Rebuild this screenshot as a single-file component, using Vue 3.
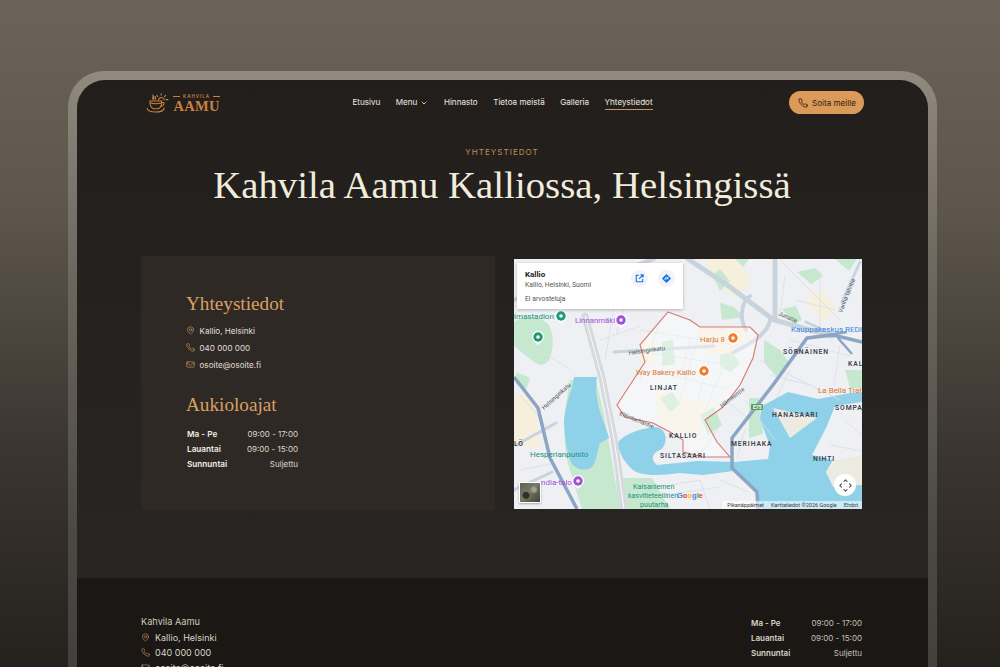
<template>
  <div class="stage">
    <div class="device">
      <div class="screen">
        <header class="topbar">
          <a class="logo">
            <svg class="logo-cup" viewBox="0 0 24 24" fill="none" stroke="#c98240" stroke-width="1.100" stroke-linecap="round">
              <path d="M4 10.500h12.500c0 4.500-1.600 7.200-3.600 8H7.600c-2-.8-3.600-3.500-3.600-8z" />
              <path d="M4.600 12.600c3 .9 8 .9 11.400 0" />
              <path d="M16.300 12h1.800c1.400 0 1.400 3.200-2.800 4.400" />
              <path d="M1.200 18.200c.4 2.600 4 3.800 8.800 3.800s8.200-1.200 9-4" />
              <path d="M7.200 8.600c-1.200-1.600.9-2.200.2-4.100 1.700 1.300 1 2.800.7 4.100M10 8.600c-.6-1 .3-1.600 0-2.800" />
              <path d="M13 9.300a3.200 3.200 0 0 1 6.200-.3M15.800 4.300V2.800M12.300 5.800l-1-1.200M19.300 5.800l1.300-1.200M21 9h1.800" />
            </svg>
            <span class="logo-words">
              <span class="logo-small"><i></i>KAHVILA<i></i></span>
              <span class="logo-big">AAMU</span>
            </span>
          </a>
          <nav class="nav">
            <a v-for="item in navItems" :key="item.label" :class="{ active: item.active }">
              {{ item.label }}
              <svg v-if="item.caret" viewBox="0 0 24 24" fill="none" stroke="currentColor" stroke-width="2.400" stroke-linecap="round" stroke-linejoin="round"><path d="m6 9 6 6 6-6" /></svg>
            </a>
          </nav>
          <button class="call">
            <svg viewBox="0 0 24 24" fill="none" stroke="currentColor" stroke-width="2" stroke-linecap="round" stroke-linejoin="round"><path :d="icons.phone" /></svg>
            Soita meille
          </button>
        </header>

        <section class="hero">
          <p class="eyebrow">YHTEYSTIEDOT</p>
          <h1>Kahvila Aamu Kalliossa, Helsingissä</h1>
        </section>

        <section class="contact">
          <div class="panel">
            <h2>Yhteystiedot</h2>
            <ul class="info">
              <li v-for="row in contactRows" :key="row.text">
                <svg viewBox="0 0 24 24" fill="none" stroke="#c9935a" stroke-width="1.800" stroke-linecap="round" stroke-linejoin="round">
                  <path v-for="d in row.paths" :key="d" :d="d" />
                </svg>
                {{ row.text }}
              </li>
            </ul>
            <h2 class="second">Aukioloajat</h2>
            <div class="hours">
              <template v-for="row in hours" :key="row.day">
                <b>{{ row.day }}</b><span>{{ row.time }}</span>
              </template>
            </div>
          </div>

          <div class="map">
            <svg class="map-art" viewBox="514 259 348 250" preserveAspectRatio="none">
              <rect x="514" y="259" width="348" height="250" fill="#eef0f3" />
              <!-- blocks and parks -->
              <g fill="#f6efdc">
                <path d="M708 259l30 0 14 24-18 14-26-20z" />
                <path d="M810 291h14l12 18-12 12-16-18z" />
                <path d="M514 395h20l6 52h-26z" />
                <path d="M655 390l60 16-20 30-34-10z" />
                <path d="M700 328h45l5 10-18 20-30-8z" />
                <path d="M640 340l16 2-4 24-14-6z" />
              </g>
              <g fill="#c5e8cf">
                <path d="M514 322c10-8 26-6 34 2 6 8 6 22 2 34-4 8-10 8-16 4l-20-16z" />
                <path d="M570 380c-6 30-8 60-2 84l14 45h38l-10-60-6-34-8-35z" />
                <path d="M616 478l36 0 18 31h-52z" />
                <path d="M712 275l8-6 10 12-10 10zM735 259h14l-6 8zM797 272l18-4 8 8-12 8zM835 259h22l-8 12zM782 309l14-3 6 14-8 4zM720 303l14 4 10 10-22 3zM764 340l16 10 10 14-14 12-12-14zM845 370h17v18h-12zM720 355l12-3 8 12-10 8-10-6zM662 342l11-2 2 24-13 2zM530 268l14-5 6 8-12 6zM700 415l14-8 8 18-14 10zM660 398l12-6 8 12-10 8zM749 398l10 0 4 36-14 4zM854 450l8-6v40h-6zM618 268l14-4 6 10-14 6zM640 300l12-4 4 8-12 6zM555 290l12-4 6 10-12 4zM516 372l14 6-4 12-10-6z" />
              </g>
              <!-- water -->
              <path fill="#8fd1e8" d="M574 377h23c-2 12 0 26 4 38 3 8 6 16 8 23l-9 5c-3 8-3 18-8 24-6 4-14 4-20-3-5-10-7-26-8-40 0-12 3-20 5-28 3-6 4-12 5-19z" />
              <path fill="#8fd1e8" d="M618 443c4-8 22-15 39-16 11 3 11 18 3 23-8 3-10 10-3 15l40-4 38 1 33-3 2-13-10-27 2-13 26-14 30 7 32-6h12v117H760l-2-19-25-20-30 4-23-2c-20 3-40 3-47-3-8-7-15-17-15-29z" />
              <path fill="#eef0f3" d="M862 402l-27 4-9 22-14 27 21 5-7 12 7 13 29-3z" />
              <path fill="#ecebe2" d="M835 461l27-6v30l-29 2-7-15z" />
              <path fill="#ecebe2" d="M773 408l44 10-27 20z" />
              <!-- minor streets -->
              <g fill="none" stroke="#d9dee4" stroke-width=".8">
                <path d="M640 330l100 16M645 352l90 14M655 372l70 16M660 320l-20 60M700 330l-20 70M735 340l-30 70M790 340l60 16M820 270v60M780 260l60 60M560 275l-46 40M530 345l40 24M625 270l60 30M760 360l80 40M775 440l-30-40M640 490l60-10M700 480l10 29M795 300l40 10M785 275l-5 40M840 345l-6 40M790 370l-14 28M770 375l40 10M615 300l-10 60M630 285l-14 50M520 395l30 35M690 340l-8 30M710 358l-12 40M725 400l25 20M700 455l20-30M745 430l-8 28M845 420l17 16M830 445l32 6M720 480l28 12M665 495l55-8M600 340l40-14M520 470l30-6" />
              </g>
              <!-- main roads -->
              <g fill="none" stroke="#c9d3de" stroke-linecap="round">
                <path stroke-width="5" d="M688 259l42 28 44 33 58 16M775 259v60" />
                <path stroke-width="4" d="M770 320c-2 14-20 24-36 32M750 296c-10 8-10 24-4 34M514 300l40-16 50-8 50-17" />
                <path stroke-width="3" d="M614 352l100-6M516 445l40-22M514 490l38-18M842 302l18-40M806 322l26 12" />
                <path stroke-width="7" stroke="#d6dade" d="M585 316l17 62 12 60 10 71" />
              </g>
              <g fill="none" stroke="#fafafa" stroke-width="1"><path d="M585 316l17 62 12 60 10 71" /></g>
              <g fill="none" stroke="#8ba6c4" stroke-width="3.500" stroke-linejoin="round">
                <path d="M514 377l24 31 12 50 27 51" />
                <path d="M862 342l-29-7-26 3-34 47-41 53v30l25 24 1 17" />
                <path stroke-width="2.500" d="M807 338l40-6M838 338l14 16" />
              </g>
              <!-- Kallio boundary -->
              <path fill="#fff" fill-opacity=".4" stroke="#d9786e" stroke-width="1.100" d="M668 312l22 8 10 7h50l8 8-5 23-13 27-17 22-18 13 12 22 13 15-27 0-20-5v-12l-13-8-17-9-28-6-8-12 13-20 15-23-5-17z" />
              <!-- street names -->
              <g font-size="6" fill="#4d5660" class="street">
                <text transform="translate(629 355) rotate(-8)">Helsinginkatu</text>
                <text transform="translate(544 410) rotate(-42)">Helsinginkatu</text>
                <text transform="translate(619 415) rotate(22)">Eläintarhantie</text>
                <text transform="translate(722 408) rotate(-38)">Hämeentie</text>
                <text transform="translate(778 315) rotate(24)">Junatie</text>
                <text transform="translate(842 313) rotate(-68)">Vanha talvitie</text>
              </g>
              <!-- place labels -->
              <text v-for="label in mapLabels" :key="label.text" :x="label.x" :y="label.y" :fill="label.color" :font-size="label.size" :font-weight="label.weight" :letter-spacing="label.spacing">{{ label.text }}</text>
              <!-- pins -->
              <g v-for="pin in mapPins" :key="pin.x + '-' + pin.y">
                <path fill="#fff" :d="`M${pin.x - 6} ${pin.y}a6 6 0 0 1 12 0c0 3-3 5-6 8-3-3-6-5-6-8z`" />
                <circle :cx="pin.x" :cy="pin.y" r="4.700" :fill="pin.color" />
                <circle :cx="pin.x" :cy="pin.y" r="1.800" fill="#fff" />
              </g>
              <rect x="751" y="404" width="12" height="6" rx="1" fill="#5c9a63" />
              <text x="753" y="409" font-size="5" fill="#fff" font-weight="700">E75</text>
            </svg>

            <div class="place-card">
              <div>
                <strong>Kallio</strong>
                <p>Kallio, Helsinki, Suomi</p>
                <p class="reviews">Ei arvosteluja</p>
              </div>
              <span class="round">
                <svg viewBox="0 0 24 24" fill="none" stroke="#1a73e8" stroke-width="2.400"><path d="M19 13v6H5V5h6M14 4h6v6M20 4l-9 9" /></svg>
              </span>
              <span class="round">
                <svg viewBox="0 0 24 24"><path fill="#1a73e8" d="M12 2l10 10-10 10L2 12z" /><path fill="none" stroke="#fff" stroke-width="2" d="M9 15v-4h6M13 8l3 3-3 3" /></svg>
              </span>
            </div>
            <div class="thumb"></div>
            <span class="google"><i>G</i><i>o</i><i>o</i><i>g</i><i>l</i><i>e</i></span>
            <span class="compass">
              <svg viewBox="0 0 24 24" fill="none" stroke="#555" stroke-width="1.800" stroke-linecap="round" stroke-linejoin="round"><path d="M9.500 5.500 12 3l2.500 2.500M9.500 18.500 12 21l2.500-2.500M5.500 9.500 3 12l2.500 2.500M18.500 9.500 21 12l-2.500 2.500" /></svg>
            </span>
            <div class="map-foot">
              <span>Pikanäppäimet</span><span>Karttatiedot ©2026 Google</span><span>Ehdot</span>
            </div>
          </div>
        </section>

        <footer class="foot">
          <div class="foot-left">
            <p class="foot-name">Kahvila Aamu</p>
            <ul>
              <li v-for="row in contactRows" :key="row.text">
                <svg viewBox="0 0 24 24" fill="none" stroke="#b9875a" stroke-width="1.800" stroke-linecap="round" stroke-linejoin="round">
                  <path v-for="d in row.paths" :key="d" :d="d" />
                </svg>
                {{ row.text }}
              </li>
            </ul>
          </div>
          <div class="hours foot-hours">
            <template v-for="row in hours" :key="row.day">
              <b>{{ row.day }}</b><span>{{ row.time }}</span>
            </template>
          </div>
        </footer>
      </div>
    </div>
  </div>
</template>

<script setup>
const icons = {
  pin: ['M20 10c0 5-5.500 9.700-7.400 11.200a1 1 0 0 1-1.200 0C9.500 19.700 4 15 4 10a8 8 0 0 1 16 0z', 'M15 10a3 3 0 1 1-6 0 3 3 0 0 1 6 0z'],
  phone: 'M22 16.920v3a2 2 0 0 1-2.180 2 19.790 19.790 0 0 1-8.630-3.070 19.500 19.500 0 0 1-6-6 19.790 19.790 0 0 1-3.070-8.670A2 2 0 0 1 4.110 2h3a2 2 0 0 1 2 1.720 12.840 12.840 0 0 0 .7 2.810 2 2 0 0 1-.45 2.110L8.090 9.910a16 16 0 0 0 6 6l1.270-1.270a2 2 0 0 1 2.110-.45 12.840 12.840 0 0 0 2.810.7A2 2 0 0 1 22 16.920z',
  mail: ['M4 5h16a2 2 0 0 1 2 2v10a2 2 0 0 1-2 2H4a2 2 0 0 1-2-2V7a2 2 0 0 1 2-2z', 'm22 8-10 6L2 8']
}

const navItems = [
  { label: 'Etusivu' },
  { label: 'Menu', caret: true },
  { label: 'Hinnasto' },
  { label: 'Tietoa meistä' },
  { label: 'Galleria' },
  { label: 'Yhteystiedot', active: true }
]

const contactRows = [
  { text: 'Kallio, Helsinki', paths: icons.pin },
  { text: '040 000 000', paths: [icons.phone] },
  { text: 'osoite@osoite.fi', paths: icons.mail }
]

const hours = [
  { day: 'Ma - Pe', time: '09:00 - 17:00' },
  { day: 'Lauantai', time: '09:00 - 15:00' },
  { day: 'Sunnuntai', time: 'Suljettu' }
]

const dark = { color: '#3c434b', size: 6.800, weight: 600, spacing: 0.9 }
const teal = { color: '#22917a', size: 8 }
const mapLabels = [
  { text: 'imastadion', x: 514, y: 319, ...teal },
  { text: 'Linnanmäki', x: 575, y: 323, color: '#a34fd6', size: 7.800 },
  { text: 'Harju 8', x: 700, y: 342, color: '#e0752c', size: 7.800 },
  { text: 'Way Bakery Kallio', x: 636, y: 375, color: '#e0752c', size: 7.600 },
  { text: 'Kauppakeskus REDI', x: 791, y: 332, color: '#3a84df', size: 8 },
  { text: 'La Bella Trat', x: 818, y: 393, color: '#e0752c', size: 8 },
  { text: 'SÖRNÄINEN', x: 783, y: 354, ...dark },
  { text: 'KAL', x: 848, y: 366, ...dark },
  { text: 'LINJAT', x: 650, y: 390, ...dark },
  { text: 'KALLIO', x: 669, y: 438, ...dark },
  { text: 'SILTASAARI', x: 660, y: 458, ...dark },
  { text: 'MERIHAKA', x: 731, y: 446, ...dark },
  { text: 'HANASAARI', x: 772, y: 417, ...dark },
  { text: 'SOMPA', x: 835, y: 410, ...dark },
  { text: 'NIHTI', x: 813, y: 461, ...dark },
  { text: 'LÖ', x: 514, y: 446, ...dark },
  { text: 'Hesperianpuisto', x: 530, y: 457, ...teal },
  { text: 'ndia-talo', x: 541, y: 485, color: '#a34fd6', size: 8 },
  { text: 'Kaisaniemen', x: 633, y: 489, color: '#22917a', size: 7.200 },
  { text: 'kasvitieteellinen', x: 628, y: 498, color: '#22917a', size: 7 },
  { text: 'puutarha', x: 640, y: 507, color: '#22917a', size: 7.200 }
]

const mapPins = [
  { x: 561, y: 316, color: '#1e9a73' },
  { x: 538, y: 337, color: '#1e9a73' },
  { x: 621, y: 320, color: '#a34fd6' },
  { x: 733, y: 338, color: '#ef7d2d' },
  { x: 704, y: 371, color: '#ef7d2d' },
  { x: 578, y: 481, color: '#a34fd6' }
]
</script>

<style scoped>
.stage {
  height: 667px;
  overflow: hidden;
  padding-top: 71px;
  box-sizing: border-box;
  font-family: Inter, "Noto Sans", sans-serif;
}

.device {
  width: 851px;
  margin: 0 0 0 68px;
  padding: 9px 9px 0;
  border-radius: 36px 36px 0 0;
  background: linear-gradient(#928a7e 0, #868075 50px, #6a655c 220px, #4c4945 460px, #42403d 600px);
}

.screen {
  height: 900px;
  border-radius: 28px 28px 0 0;
  background: linear-gradient(#211e1b, #282522 490px);
  overflow: hidden;
}

.topbar {
  display: flex;
  align-items: center;
  justify-content: space-between;
  padding: 11px 64px 0 69px;
  height: 23px;
}

.logo {
  display: flex;
  align-items: center;
  gap: 4px;
  width: 74px;
}

.logo-cup {
  width: 23px;
  height: 23px;
  flex: none;
}

.logo-words {
  display: flex;
  flex-direction: column;
  align-items: center;
  color: #c98240;
}

.logo-small {
  display: flex;
  align-items: center;
  gap: 3px;
  font-size: 4.500px;
  letter-spacing: 1px;
  font-weight: 600;
  line-height: 6px;
}

.logo-small i {
  width: 7px;
  height: 1px;
  background: #c98240;
}

.logo-big {
  font-family: "Liberation Serif", serif;
  font-weight: 700;
  font-size: 14.500px;
  line-height: 12px;
  letter-spacing: .3px;
}

.nav {
  display: flex;
  align-items: center;
  gap: 15.500px;
  margin-right: 4px;
  font-size: 8.100px;
  font-weight: 400;
  color: #f1ece3;
}

.nav a {
  display: flex;
  align-items: center;
  gap: 3px;
  line-height: 13px;
}

.nav a.active {
  border-bottom: 1px solid #c9935a;
  margin-top: 1px;
}

.nav svg {
  width: 8px;
  height: 8px;
}

.call {
  display: flex;
  align-items: center;
  gap: 4px;
  height: 23px;
  width: 75px;
  padding: 0 0 0 9px;
  border: 0;
  border-radius: 12px;
  background: #dc9a58;
  color: #2b1f14;
  font: 400 8.100px Inter, sans-serif;
  white-space: nowrap;
}

.call svg {
  width: 10px;
  height: 10px;
  flex: none;
}

.hero {
  text-align: center;
  padding-top: 33px;
  margin-left: -1px;
}

.eyebrow {
  margin: 0;
  font-size: 8px;
  line-height: 10px;
  letter-spacing: 1.050px;
  color: #c08f59;
}

h1 {
  margin: 5px 0 0;
  font-family: "Liberation Serif", serif;
  font-weight: 400;
  font-size: 38.800px;
  line-height: 46px;
  color: #f1ecde;
}

.contact {
  display: grid;
  grid-template-columns: 354px 348px;
  column-gap: 19px;
  padding: 48px 0 0 64px;
}

.panel {
  height: 254px;
  padding: 36px 0 0 45px;
  box-sizing: border-box;
  background: #2f2925;
}

h2 {
  margin: 0;
  font-family: "Liberation Serif", serif;
  font-weight: 400;
  font-size: 19.200px;
  line-height: 24px;
  color: #d9a062;
}

h2.second {
  margin-top: 20px;
}

.info {
  list-style: none;
  margin: 6px 0 0;
  padding: 0;
  font-size: 8.100px;
  color: #e4dfd5;
}

.info li {
  display: flex;
  align-items: center;
  gap: 4.500px;
  height: 17px;
}

.info svg {
  width: 9px;
  height: 9px;
}

.hours {
  display: grid;
  grid-template-columns: auto auto;
  justify-content: space-between;
  width: 111px;
  margin: 10px 0 0 1px;
  font-size: 8px;
  line-height: 15px;
  color: #ded9cf;
}

.hours b {
  font-weight: 600;
  font-size: 8.200px;
  color: #f1ece3;
}

.hours span {
  text-align: right;
}

.map {
  position: relative;
  height: 250px;
  margin-top: 3px;
  overflow: hidden;
}

.map-art {
  display: block;
  width: 348px;
  height: 250px;
  font-family: Roboto, sans-serif;
}

.place-card {
  position: absolute;
  left: 3px;
  top: 4px;
  width: 166px;
  height: 46px;
  box-sizing: border-box;
  padding: 7px 8px 0;
  display: flex;
  align-items: flex-start;
  gap: 10px;
  background: #fff;
  font-family: Roboto, sans-serif;
  font-size: 6.800px;
  color: #555;
  box-shadow: 0 1px 3px rgba(0, 0, 0, .25);
}

.place-card > div {
  flex: 1;
}

.place-card strong {
  display: block;
  font-size: 8px;
  line-height: 10px;
  color: #222;
}

.place-card p {
  margin: 1px 0 0;
  line-height: 9px;
}

.place-card .reviews {
  margin-top: 5px;
}

.round {
  width: 17px;
  height: 17px;
  border-radius: 50%;
  background: #f1f3f4;
  display: flex;
  align-items: center;
  justify-content: center;
}

.round svg {
  width: 11px;
  height: 11px;
}

.thumb {
  position: absolute;
  left: 5px;
  bottom: 6px;
  width: 22px;
  height: 21px;
  border: 1px solid #fff;
  box-sizing: border-box;
  background:
    radial-gradient(circle at 30% 65%, #2f3128 0 3px, transparent 4px),
    radial-gradient(circle at 70% 35%, #a0a28e 0 2px, transparent 4px),
    linear-gradient(135deg, #5d6052, #777a66 45%, #3f4238);
  box-shadow: 0 1px 2px rgba(0, 0, 0, .3);
}

.google {
  position: absolute;
  left: 163px;
  bottom: 9px;
  font: 700 7.500px "Liberation Sans", sans-serif;
}

.google i {
  font-style: normal;
  color: #4285f4;
}

.google i:nth-child(2), .google i:nth-child(6) {
  color: #ea4335;
}

.google i:nth-child(3) {
  color: #fbbc05;
}

.google i:nth-child(5) {
  color: #34a853;
}

.compass {
  position: absolute;
  right: 6px;
  bottom: 13px;
  width: 22px;
  height: 22px;
  border-radius: 50%;
  background: #fff;
  display: flex;
  align-items: center;
  justify-content: center;
}

.compass svg {
  width: 15px;
  height: 15px;
}

.map-foot {
  position: absolute;
  right: 0;
  bottom: 0;
  display: flex;
  gap: 7px;
  padding: 0 4px 0 5px;
  font: 5.500px/8px Roboto, sans-serif;
  color: #3c4043;
  background: rgba(255, 255, 255, .55);
}

.foot {
  margin-top: 68px;
  height: 260px;
  background: #1a1714;
  display: flex;
  justify-content: space-between;
  align-items: flex-start;
  padding: 37px 66px 0 64px;
  color: #d9d4ca;
  font-size: 9px;
}

.foot-name {
  margin: 0;
  line-height: 13px;
  font-size: 9.200px;
  color: #cfc9be;
}

.foot ul {
  list-style: none;
  margin: 2px 0 0;
  padding: 0;
}

.foot li {
  display: flex;
  align-items: center;
  gap: 5px;
  height: 15px;
}

.foot li svg {
  width: 9px;
  height: 9px;
  flex: none;
}

.foot-hours {
  width: 111px;
  margin: 1px 0 0;
  font-size: 8px;
  line-height: 15px;
  color: #c6c1b7;
}

.foot-hours b {
  font-size: 8px;
  color: #d9d4ca;
}
</style>

<style>
html, body {
  margin: 0;
  height: 667px;
  overflow: hidden;
  background: linear-gradient(#6b6358 0, #5f574d 200px, #3a3530 450px, #25211d 667px);
}
</style>
